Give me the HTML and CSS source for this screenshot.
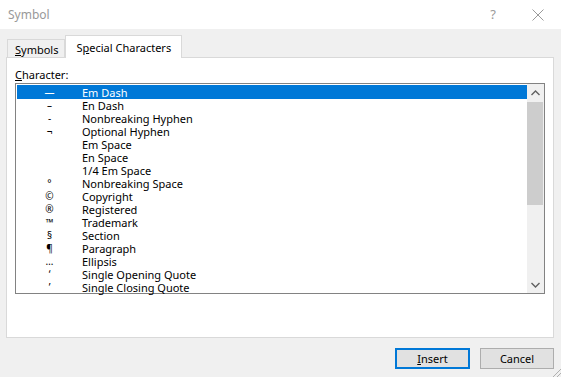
FILE: index.html
```html
<!DOCTYPE html>
<html lang="en">
<head>
  <meta charset="UTF-8" />
  <title>Symbol</title>
  <link rel="stylesheet" href="styles.css">
</head>
<body>

<div class="titlebar">
  <div class="title">Symbol</div>
  <div class="title-buttons">
    <span class="help">?</span>
    <svg class="close" width="12" height="12" viewBox="0 0 12 12">
      <path d="M0.5 0.5 L11.5 11.5 M11.5 0.5 L0.5 11.5" stroke="#9a9a9a" stroke-width="1" fill="none"/>
    </svg>
  </div>
</div>

<div class="dialog">
  <div class="tabs">
    <div class="tab"><u>S</u>ymbols</div>
    <div class="tab active">S<u>p</u>ecial Characters</div>
  </div>

  <div class="panel">
    <div class="label"><u>C</u>haracter:</div>
    <div class="listbox">
      <div class="rows" id="rows"></div>
      <div class="scrollbar">
        <div class="arrow">
          <svg width="9" height="6" viewBox="0 0 9 6"><path d="M0.5 5 L4.5 1 L8.5 5" stroke="#606060" stroke-width="1.4" fill="none"/></svg>
        </div>
        <div class="thumb"></div>
        <div class="track"></div>
        <div class="arrow">
          <svg width="9" height="6" viewBox="0 0 9 6"><path d="M0.5 1 L4.5 5 L8.5 1" stroke="#606060" stroke-width="1.4" fill="none"/></svg>
        </div>
      </div>
    </div>
  </div>

  <div class="buttons">
    <button class="btn default"><u>I</u>nsert</button>
    <button class="btn">Cancel</button>
  </div>
</div>

<svg class="grip" width="9" height="9" viewBox="0 0 9 9">
  <path d="M9 1 L1 9 M9 5 L5 9" stroke="#b0b0b0" stroke-width="1" fill="none"/>
</svg>

<script>
  const chars = [
    ["\u2014", "Em Dash"],
    ["\u2013", "En Dash"],
    ["-", "Nonbreaking Hyphen"],
    ["\u00ac", "Optional Hyphen"],
    ["", "Em Space"],
    ["", "En Space"],
    ["", "1/4 Em Space"],
    ["\u00b0", "Nonbreaking Space"],
    ["\u00a9", "Copyright"],
    ["\u00ae", "Registered"],
    ["\u2122", "Trademark"],
    ["\u00a7", "Section"],
    ["\u00b6", "Paragraph"],
    ["\u2026", "Ellipsis"],
    ["\u2018", "Single Opening Quote"],
    ["\u2019", "Single Closing Quote"]
  ];

  document.getElementById("rows").innerHTML = chars.map((c, i) => `
    <div class="row${i === 0 ? " selected" : ""}">
      <span class="sym">${c[0]}</span><span class="name">${c[1]}</span>
    </div>
  `).join('');
</script>

</body>
</html>
```

FILE: styles.css
```css
body {
  margin: 0;
  background: #f0f0f0;
  font-family: "Noto Sans", "Open Sans", sans-serif;
  font-size: 11px;
  color: #000;
  width: 561px;
  height: 377px;
  overflow: hidden;
  position: relative;
}

u {
  text-decoration: underline;
  text-underline-offset: 1px;
}

.titlebar {
  height: 29px;
  background: #fff;
  display: flex;
  justify-content: space-between;
  align-items: center;
  padding: 0 17px 0 8px;
}

.title {
  color: #999;
  font-size: 12px;
  margin-top: -1px;
}

.title-buttons {
  display: flex;
  align-items: center;
  gap: 36px;
}

.help {
  color: #9a9a9a;
  font-size: 13px;
  margin-top: -2px;
}

.dialog {
  padding: 7px 7px 0 6px;
}

.tabs {
  display: flex;
  align-items: flex-end;
  padding-left: 1px;
  height: 21px;
}

.tab {
  height: 17px;
  padding: 0 6px 0 7px;
  border: 1px solid #d9d9d9;
  border-bottom: none;
  line-height: 20px;
  background: #f0f0f0;
}

.tab.active {
  height: 22px;
  margin-bottom: -1px;
  background: #fff;
  padding: 0 10px;
  line-height: 23px;
  position: relative;
  z-index: 1;
}

.panel {
  background: #fff;
  border: 1px solid #d9d9d9;
  height: 279px;
  padding: 0 7px 0 8px;
}

.label {
  line-height: 14px;
  margin-top: 10px;
  margin-bottom: 1px;
}

.listbox {
  display: flex;
  border: 1px solid #828282;
  height: 209px;
  width: 528px;
}

.rows {
  flex: 1;
  padding: 1px 0 0 1px;
}

.row {
  height: 13px;
  line-height: 13px;
  padding-top: 1px;
  margin-bottom: -1px;
  display: flex;
  white-space: nowrap;
}

.row.selected {
  background: #0078d7;
  color: #fff;
}

.sym {
  width: 65px;
  text-align: center;
  font-size: 10px;
}

.scrollbar {
  width: 17px;
  background: #f0f0f0;
  display: flex;
  flex-direction: column;
}

.arrow {
  height: 17px;
  display: flex;
  align-items: center;
  justify-content: center;
}

.thumb {
  height: 103px;
  margin: 1px 1px 0 0;
  background: #cdcdcd;
}

.track {
  flex: 1;
}

.buttons {
  display: flex;
  justify-content: flex-end;
  gap: 10px;
  margin-top: 10px;
}

.btn {
  font-family: inherit;
  font-size: 11px;
  width: 74px;
  height: 21px;
  background: #e1e1e1;
  border: 1px solid #adadad;
  padding: 0;
  color: #000;
}

.btn.default {
  border: 2px solid #0078d7;
  width: 75px;
}

.grip {
  position: absolute;
  right: 0;
  bottom: 0;
}
```
